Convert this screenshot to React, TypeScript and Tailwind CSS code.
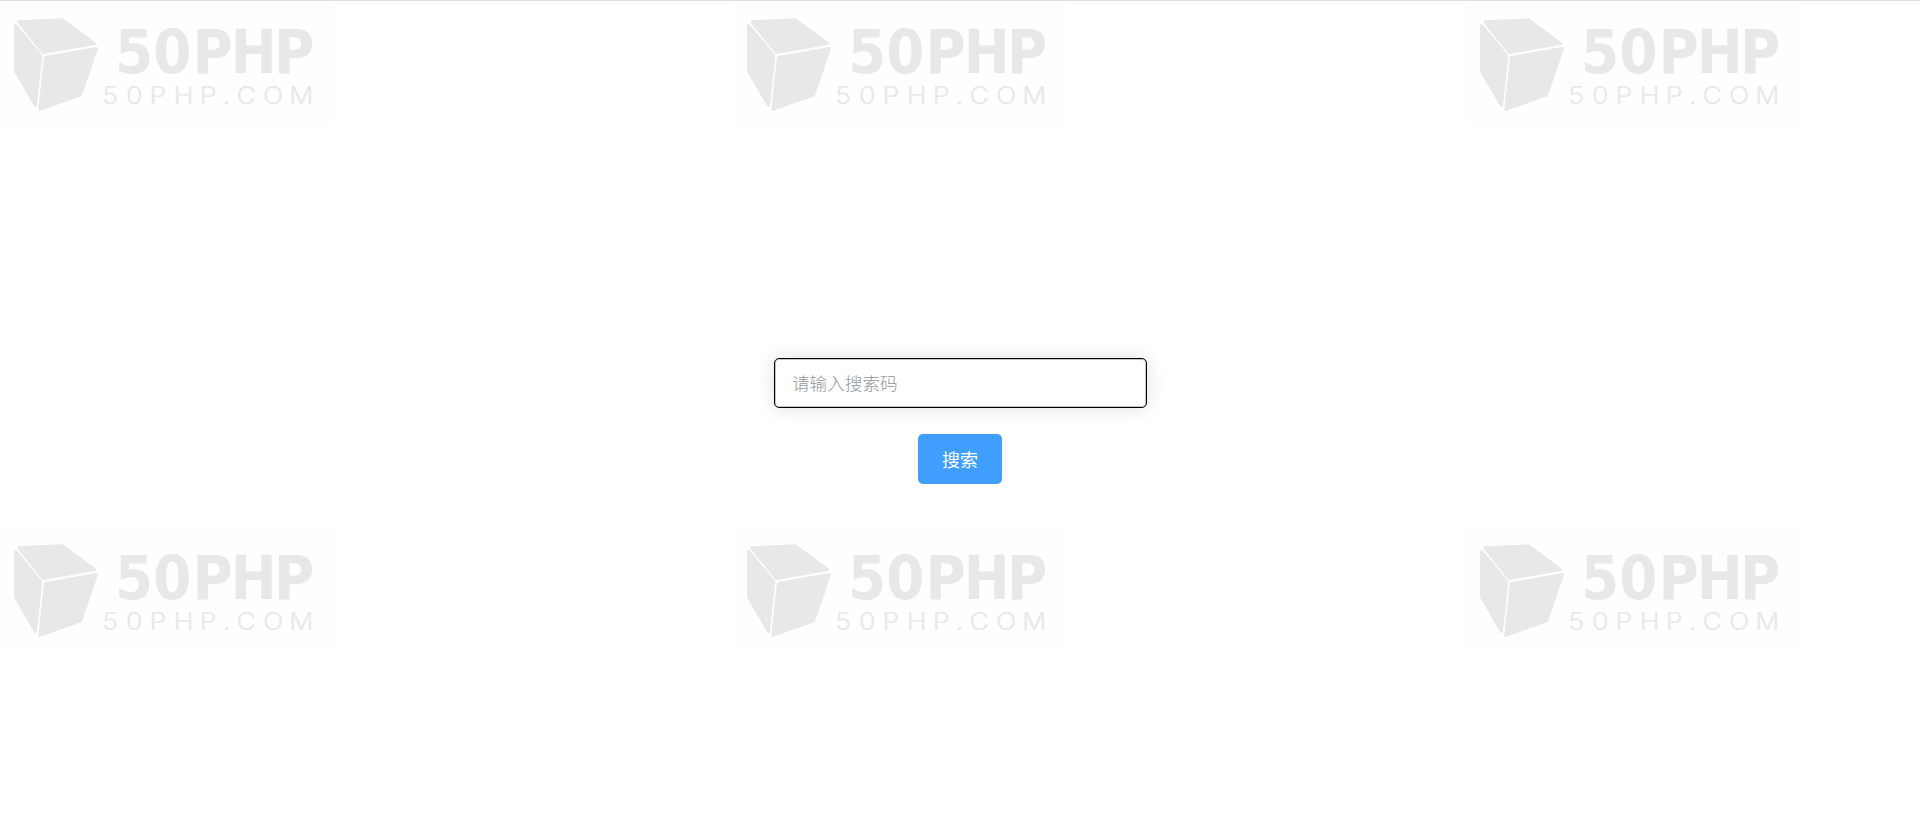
import { useState } from "react";

const ROWS = [0, 1];
const COLS = [0, 1, 2];

function Watermark() {
  return (
    <svg className="block h-[126px] w-[334px] bg-[#fefefe]" viewBox="0 0 334 126" fill="#e8e8e8" aria-hidden="true">
      <g stroke="#e8e8e8" strokeWidth="3" strokeLinejoin="round">
        <path d="M18.8 21.8 62.3 19.8 94.6 43.6 43.4 52.6Z" />
        <path d="M15.5 25.5 40.8 55.8 35.5 105.5 15.5 71Z" />
        <path d="M45.4 57.4 96.5 48.6 80.6 94.8 39.8 109.4Z" />
      </g>
      <text
        className="font-['DejaVu_Sans',sans-serif] font-bold"
        transform="scale(0.91 1)"
        fontSize="60.3"
        x="126.5 168.5 211.5 253.5 301"
        y="73"
      >
        50PHP
      </text>
      <text
        className="font-['Inter',sans-serif] font-light"
        stroke="#e8e8e8"
        strokeWidth="0.2"
        transform="scale(1.1 1)"
        fontSize="24.3"
        x="93 114.5 136 158 181.5 202.5 215 239 263"
        y="104"
      >
        50PHP.COM
      </text>
    </svg>
  );
}

export default function App() {
  const [code, setCode] = useState("");

  return (
    <div className="relative h-[839px] overflow-hidden border-t border-[#e0e0e0] bg-white font-['Noto_Sans_CJK_SC',sans-serif]">
      {/* repeated watermark behind the form */}
      <div className="pointer-events-none absolute inset-x-0 -top-px flex flex-col gap-[400px]">
        {ROWS.map((r) => (
          <div key={r} className="flex gap-[399px]">
            {COLS.map((c) => (
              <div key={c} className="shrink-0">
                <Watermark />
              </div>
            ))}
          </div>
        ))}
      </div>

      <form
        className="relative flex flex-col items-center gap-[26px] pt-[357px]"
        onSubmit={(e) => e.preventDefault()}
      >
        <input
          className="ml-px h-[50px] w-[373px] rounded-[5px] border border-black bg-white px-[17px] pb-[2px] text-[17.6px] font-light shadow-[0_0_20px_rgba(0,0,0,0.12),inset_0_0_0_1px_#c4c4c4] outline-none placeholder:text-[#94969d]"
          placeholder="请输入搜索码"
          value={code}
          onChange={(e) => setCode(e.currentTarget.value)}
        />
        <button
          type="submit"
          className="h-[50px] w-[84px] rounded-[5px] bg-[#409eff] text-[18px] text-white"
        >
          搜索
        </button>
      </form>
    </div>
  );
}
